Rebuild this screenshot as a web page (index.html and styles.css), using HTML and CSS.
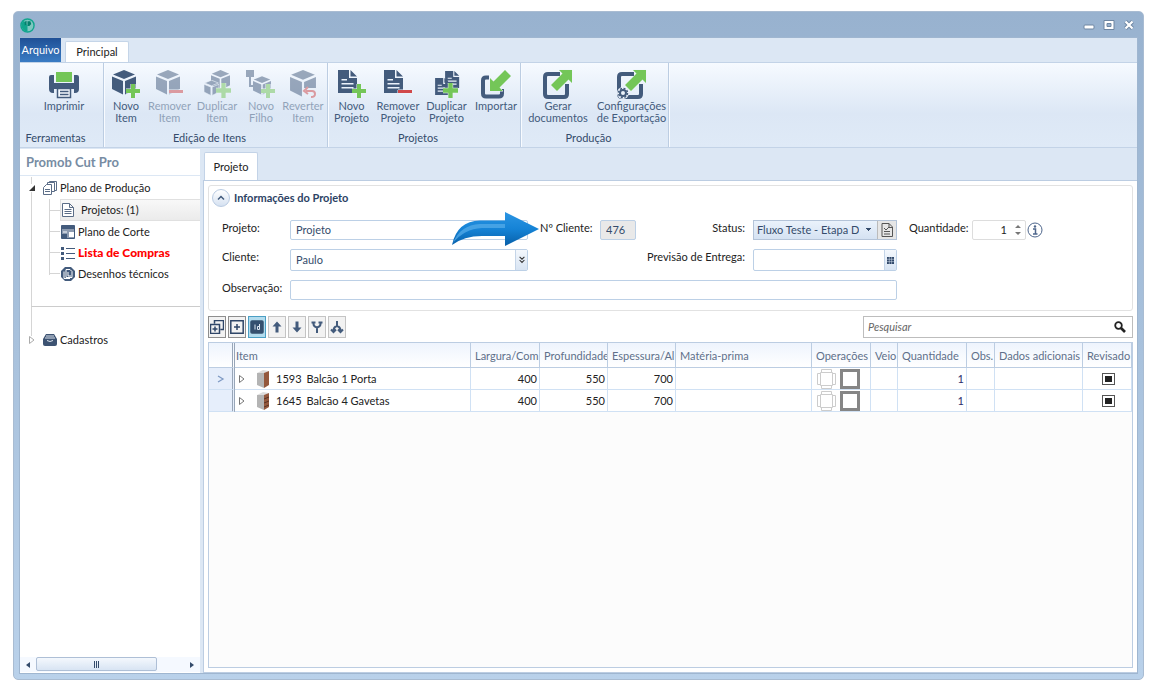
FILE: index.html
```html
<!DOCTYPE html>
<html lang="pt-BR">
<head>
<meta charset="utf-8">
<title>Promob Cut Pro</title>
<link rel="stylesheet" href="styles.css">
</head>
<body>
<svg class="defs" aria-hidden="true">
  <defs>
    <symbol id="cube" viewBox="0 0 24 25"><path d="M12 0 23 4.500 12 9 1 4.500ZM0 6.500 11 11V24.500L0 19ZM24 6.500 13 11V24.500L24 19Z"/></symbol>
    <symbol id="doc" viewBox="0 0 20 23"><path fill-rule="evenodd" d="M0 0H11V8H19V23H0ZM3.500 9H9V10.500H3.500ZM3.500 13H15.500V14.500H3.500ZM3.500 17H15.500V18.500H3.500ZM12.500 0 19 6.500H12.500Z"/></symbol>
    <symbol id="plus" viewBox="0 0 14 14"><path class="halo" d="M5 0h4v5H14v4H9V14h-4V9H0v-4h5z"/></symbol>
    <symbol id="box" viewBox="0 0 28 28"><path d="M17 2H5Q2 2 2 5V22Q2 25 5 25H21Q24 25 24 22V12"/></symbol>
  </defs>
</svg>

<div class="window">
  <header class="titlebar">
    <svg class="logo" viewBox="0 0 16 16"><circle cx="8" cy="8" r="7" fill="#7fc7c0" stroke="#12a58d" stroke-width="1.500"/><path d="M8 8v6.500a6.500 6.500 0 0 1-4-11.500Z" fill="#12a58d"/><path d="M5 4l2-1v4l-2 1ZM8 3.500l3 0 1 3-2 2-2 0Z" fill="#057f6c"/></svg>
    <div class="win-buttons">
      <button type="button" aria-label="Minimizar"><svg viewBox="0 0 12 10"><rect x="1" y="5" width="10" height="4" rx="1" fill="#fff" stroke="#6e86a2"/></svg></button>
      <button type="button" aria-label="Maximizar"><svg viewBox="0 0 12 10"><path d="M1 .5h10v9H1z" fill="#fff" stroke="#6e86a2"/><path d="M4 3.500h4v3H4z" fill="#9ab3d0" stroke="#6e86a2"/></svg></button>
      <button type="button" aria-label="Fechar"><svg viewBox="0 0 12 10"><path d="m2.500 1.500 7 7m0-7-7 7" stroke="#6e86a2" stroke-width="4"/><path d="m2.500 1.500 7 7m0-7-7 7" stroke="#fff" stroke-width="2.200"/></svg></button>
    </div>
  </header>

  <div class="client">
    <nav class="tabs">
      <button type="button" class="tab-file">Arquivo</button>
      <button type="button" class="tab-main">Principal</button>
    </nav>

    <section class="ribbon">
      <div class="group group-tools">
        <div class="tools">
          <button type="button" class="tool"><svg viewBox="0 0 30 30"><path d="M0 8Q0 6 2 6H5V15H25V6H28Q30 6 30 8V20Q30 24 26 24H25V17H5V24H4Q0 24 0 20Z" fill="#435b7c"/><path d="M2 14h26v6H2z" fill="#435b7c"/><path d="M7 3h16v10H7z" fill="#74c658"/><path d="M8.500 19.500h13v9h-13zM11 22.500h8.500M11 25.500h8.500" fill="#f5f9fe" stroke="#435b7c" stroke-width="1.500"/></svg>Imprimir</button>
        </div>
        <h2>Ferramentas</h2>
      </div>
      <div class="group group-items">
        <div class="tools">
          <button type="button" class="tool"><svg viewBox="0 0 30 30"><use href="#cube" x="1" y="1" width="24" height="25"/><use href="#plus" x="15" y="15" width="14" height="14"/></svg>Novo<br>Item</button>
          <button type="button" class="tool" disabled><svg viewBox="0 0 30 30"><use href="#cube" x="1" y="1" width="24" height="25"/><path class="halo red" d="M14 21h14v3H14z"/></svg>Remover<br>Item</button>
          <button type="button" class="tool" disabled><svg viewBox="0 0 30 30"><use href="#cube" x="9" y="1" width="19" height="20"/><use class="halo-dark" href="#cube" x="2" y="11" width="15" height="16"/><use href="#plus" x="14" y="14" width="15" height="15"/></svg>Duplicar<br>Item</button>
          <button type="button" class="tool" disabled><svg viewBox="0 0 30 30"><path d="M0 1h8v7H5v8h3v2H3V8H0z"/><use href="#cube" x="7" y="7" width="18" height="19"/><use href="#plus" x="15" y="15" width="14" height="14"/></svg>Novo<br>Filho</button>
          <button type="button" class="tool" disabled><svg viewBox="0 0 30 30"><use href="#cube" x="2" y="1" width="26" height="27"/><path d="M15 19h14v10H15z" fill="#e9f0f9"/><path d="M18 22h6q3 0 3 3t-4 3M20 18l-4 4 4 3" fill="none" stroke="#d0484a" stroke-width="2"/></svg>Reverter<br>Item</button>
        </div>
        <h2>Edição de Itens</h2>
      </div>
      <div class="group group-projects">
        <div class="tools">
          <button type="button" class="tool"><svg viewBox="0 0 30 30"><use href="#doc" x="1" y="1" width="20" height="23"/><use href="#plus" x="15" y="15" width="14" height="14"/></svg>Novo<br>Projeto</button>
          <button type="button" class="tool"><svg viewBox="0 0 30 30"><use href="#doc" x="1" y="1" width="20" height="23"/><path class="halo red" d="M15 21h14v3H15z"/></svg>Remover<br>Projeto</button>
          <button type="button" class="tool"><svg viewBox="0 0 30 30"><use href="#doc" x="3" y="9" width="15" height="17"/><use href="#doc" x="13" y="2" width="15" height="17"/><use href="#plus" x="11" y="14" width="15" height="15"/></svg>Duplicar<br>Projeto</button>
          <button type="button" class="tool"><svg viewBox="0 0 30 30"><path class="line" d="M8 8.500H5Q2 8.500 2 11.500V24.500Q2 27.500 5 27.500H18Q21 27.500 21 24.500V20"/><path class="halo" d="M9 9v13h13l-3.500-3.500L30 7l-6-6L12.500 12.500z"/></svg>Importar</button>
        </div>
        <h2>Projetos</h2>
      </div>
      <div class="group group-output">
        <div class="tools">
          <button type="button" class="tool"><svg viewBox="0 0 30 30"><use class="line" href="#box" x="0" y="3" width="28" height="28"/><path class="halo" d="M16 1h13v13l-3.500-3.500L14 22l-6-6L19.500 4.500z"/></svg>Gerar<br>documentos</button>
          <button type="button" class="tool"><svg viewBox="0 0 30 30"><use class="line" href="#box" x="0" y="3" width="28" height="28"/><path class="halo" d="M16 1h13v13l-3.500-3.500L14 22l-6-6L19.500 4.500z"/><circle cx="6" cy="24" r="6" fill="#eaf1fa"/><circle cx="6" cy="24" r="4.500" fill="none" stroke="#435b7c" stroke-width="1.500" stroke-dasharray="2 1.530"/><circle cx="6" cy="24" r="3" fill="none" stroke="#435b7c" stroke-width="2"/></svg>Configurações<br>de Exportação</button>
        </div>
        <h2>Produção</h2>
      </div>
    </section>

    <div class="work">
      <aside class="side">
        <h1>Promob Cut Pro</h1>
        <div class="tree">
          <div class="branch">
            <div class="node root"><svg class="twist" viewBox="0 0 8 8"><path d="M7 1v6H1z" fill="#333"/></svg><svg class="ico" viewBox="0 0 14 14"><g fill="#fff" stroke="#5b6d87"><path d="M6.500 .5h7v9h-7z"/><path d="M4.500 1.500h7v9h-7z"/><path d="m.5 6.500 3-3h5v10h-8z"/><path d="M2 8.500h5M2 10.500h5"/></g></svg>Plano de Produção</div>
            <ul>
              <li><a class="node active" href="#projetos"><svg class="ico" viewBox="0 0 14 14"><path d="M1.500 .5h7l4 4v9h-11zM8.500 .5v4h4M3.500 6.500h7M3.500 8.500h7M3.500 10.500h7" fill="#fff" stroke="#5b6d87"/></svg>Projetos: (1)</a></li>
              <li><a class="node" href="#corte"><svg class="ico" viewBox="0 0 14 14"><path d="M.5 .5h13v13H.5z" fill="#8d9bb0" stroke="#435b7c"/><path d="M1 1h12v3H1zM1 9h5v4H1z" fill="#435b7c"/><path d="M8 7h5v5H8z" fill="#fff"/><path d="M2 6h4v2H2z" fill="#c4ccd8"/></svg>Plano de Corte</a></li>
              <li><a class="node alert" href="#compras"><svg class="ico" viewBox="0 0 14 14"><path d="M0 1h3v3H0zM0 6h3v3H0zM0 11h3v3H0zM5 2h9v1H5zM5 7h9v1H5zM5 12h9v1H5z" fill="#435b7c"/></svg>Lista de Compras</a></li>
              <li><a class="node" href="#desenhos"><svg class="ico" viewBox="0 0 14 14"><path d="M4 0h6l4 4v6l-4 4H4L0 10V4z" fill="#435b7c"/><path d="M5 2.500h4l2 2v6H5zM3 4.500v7h6M7 5v4h3" fill="none" stroke="#fff"/></svg>Desenhos técnicos</a></li>
            </ul>
          </div>
          <div class="branch last">
            <div class="node root"><svg class="twist" viewBox="0 0 8 8"><path d="M1.500 .5 6 4 1.500 7.500z" fill="#fff" stroke="#aaa"/></svg><svg class="ico" viewBox="0 0 14 14"><path d="M3 1h8l3 5v5q0 2-2 2H2q-2 0-2-2V6z" fill="#3d5372"/><path d="M3 3h8M2 5h10" stroke="#dfe6ef" fill="none"/><path d="M4 7.500q3 2 6 0" stroke="#dfe6ef" fill="none"/></svg>Cadastros</div>
          </div>
        </div>
        <div class="scroll">
          <button type="button" aria-label="Rolar para a esquerda"><svg viewBox="0 0 6 8"><path d="M5 1v6L1 4z"/></svg></button>
          <div class="track"><div class="thumb"><i></i><i></i><i></i></div></div>
          <button type="button" aria-label="Rolar para a direita"><svg viewBox="0 0 6 8"><path d="M1 1v6l4-3z"/></svg></button>
        </div>
      </aside>

      <main class="main">
        <div class="doc-tabs"><button type="button">Projeto</button></div>
        <div class="page">
          <section class="info">
            <div class="info-head">
              <button type="button" aria-label="Recolher"><svg viewBox="0 0 8 6"><path d="m1 4.500 3-3 3 3" fill="none" stroke="#435b7c" stroke-width="1.500"/></svg></button>
              <h2>Informações do Projeto</h2>
            </div>
            <form class="fields">
              <label for="projeto">Projeto:</label>
              <input id="projeto" type="text" value="Projeto">
              <label class="c-ncli" for="ncli">Nº Cliente:</label>
              <input id="ncli" class="c-ncliv" type="text" value="476" readonly>
              <label class="c-status right" for="status">Status:</label>
              <div class="c-val status">
                <select id="status"><option>Fluxo Teste - Etapa Desenho</option></select>
                <button type="button" aria-label="Detalhes"><svg viewBox="0 0 12 14"><path d="M1 .5h7l3.500 3.500v9.500H1zM8 .5v4h3.500M3 5l2 2 3-3M3 8.500h6M3 11h6" fill="none" stroke="#555"/></svg></button>
              </div>
              <label class="c-qty" for="qtd">Quantidade:</label>
              <div class="c-qtyv spin"><input id="qtd" type="text" value="1"><svg viewBox="0 0 6 12"><path d="M3 1 6 4H0zM0 8h6L3 11z" fill="#777"/></svg></div>
              <svg class="c-info" viewBox="0 0 16 16"><circle cx="8" cy="8" r="7" fill="#fff" stroke="#4e668c"/><circle cx="8" cy="4.500" r="1.200" fill="#4e668c"/><path d="M6 7h2.500v5M6 12h4.500" fill="none" stroke="#4e668c" stroke-width="1.500"/></svg>

              <label for="cliente">Cliente:</label>
              <div class="combo"><input id="cliente" type="text" value="Paulo"><button type="button" aria-label="Abrir"><svg viewBox="0 0 8 10"><path d="m1 1 3 3 3-3M1 5l3 3 3-3" fill="none" stroke="#333" stroke-width="1.300"/></svg></button></div>
              <label class="c-date right" for="entrega">Previsão de Entrega:</label>
              <div class="combo c-val"><input id="entrega" type="text"><button type="button" aria-label="Calendário"><svg class="cal" viewBox="0 0 7 7"><path d="M0 0h7v7H0z" fill="#2f4668"/><path d="M0 2.300h7M0 4.600h7M2.300 0v7M4.600 0v7" stroke="#dce7f5" stroke-width=".5"/></svg></button></div>

              <label for="obs">Observação:</label>
              <input id="obs" class="c-wide" type="text">
              <svg class="pointer" viewBox="0 0 88 36"><defs><linearGradient id="blue" x1="0" y1="0" x2="0" y2="1"><stop offset="0" stop-color="#2b95e3"/><stop offset=".5" stop-color="#1583d6"/><stop offset="1" stop-color="#075fa8"/></linearGradient></defs><path d="M0 34Q5 10 28 9.500H53V1L87 18 53 35V25H30Q12 25 0 34Z" fill="url(#blue)"/><path d="M1 32Q8 14 28 13H53V17H30Q12 18 1 32Z" fill="#58aeea" opacity=".7"/></svg>
            </form>
          </section>

          <div class="bar">
            <div class="bar-buttons">
              <button type="button" aria-label="Expandir tudo"><svg viewBox="0 0 14 14"><path d="M4.500 3.500v-3h9v9h-3M.5 4.500h9v9h-9zM5 6.500v5M2.500 9h5"/></svg></button>
              <button type="button" aria-label="Expandir"><svg viewBox="0 0 14 14"><path d="M.8 .8h12.400v12.400H.8zM7 4v6M4 7h6"/></svg></button>
              <button type="button" class="on" aria-label="Mostrar Id"><svg viewBox="0 0 14 14"><rect x="1" y="1" width="12" height="12" rx="1" fill="#35506f" stroke="#35506f"/><path d="M5 4.500v5M9.500 4v5.500H7.500V6.500h2" stroke="#dfe8f2" stroke-width="1"/></svg></button>
              <button type="button" class="soft" aria-label="Subir"><svg viewBox="0 0 14 14"><path d="M7 1.500 11.500 6.500H8.500V12.500H5.500V6.500H2.500z" class="solid"/></svg></button>
              <button type="button" class="soft" aria-label="Descer"><svg viewBox="0 0 14 14"><path d="M7 12.500 11.500 7.500H8.500V1.500H5.500v6H2.500z" class="solid"/></svg></button>
              <button type="button" class="soft" aria-label="Unir"><svg viewBox="0 0 14 14"><path d="M3.500 2v2q0 2.500 3.500 3.500 3.500-1 3.500-3.500V2M7 7v6M1.500 2.500h4M8.500 2.500h4"/></svg></button>
              <button type="button" class="soft" aria-label="Separar"><svg viewBox="0 0 14 14"><path d="M7 1v5q-3.500 1-3.500 5M7 6q3.500 1 3.500 5M1 9.500l2.500 2.500L6 9.500M8 9.500l2.500 2.500L13 9.500"/></svg></button>
            </div>
            <div class="search"><input type="search" placeholder="Pesquisar" aria-label="Pesquisar"><svg viewBox="0 0 12 12"><circle cx="4.500" cy="4.500" r="3.300" fill="none" stroke="#222" stroke-width="1.800"/><path d="m7 7 4 4" stroke="#222" stroke-width="2.600"/></svg></div>
          </div>

          <div class="grid">
            <table>
              <colgroup><col class="w-mark"><col class="w-item"><col class="w-len"><col class="w-num"><col class="w-num"><col><col class="w-op"><col class="w-veio"><col class="w-qty"><col class="w-obs"><col class="w-extra"><col class="w-rev"></colgroup>
              <thead><tr><th></th><th>Item</th><th>Largura/Com</th><th>Profundidade</th><th>Espessura/Al</th><th>Matéria-prima</th><th>Operações</th><th>Veio</th><th>Quantidade</th><th>Obs.</th><th>Dados adicionais</th><th>Revisado</th></tr></thead>
              <tbody>
                <tr><td><svg class="cur" viewBox="0 0 8 8"><path d="m1 1 5 3-5 3" fill="none" stroke="#7f9ac4" stroke-width="1.300"/></svg></td>
                  <td><div class="item"><svg class="exp" viewBox="0 0 8 8"><path d="M1.500 .5 6 4 1.500 7.500z" fill="#fff" stroke="#777"/></svg><svg class="cab" viewBox="0 0 14 18"><path d="M1 3 7 0l6 1-4 2z" fill="#ddd"/><path d="M1 3l7 0v15l-7-3z" fill="#b4b4b4"/><path d="M8 3l5-2v14l-5 3z" fill="#94583d"/></svg><span>1593</span><span>Balcão 1 Porta</span></div></td>
                  <td class="n">400</td><td class="n">550</td><td class="n">700</td><td></td>
                  <td><svg class="ops" viewBox="0 0 44 20"><path d="M4.500 3.500h12v13h-12zM5.500 .5h10v3h-10zM5.500 16.500h10v3h-10zM1.500 4.500h3v11h-3zM16.500 4.500h3v11h-3z" fill="#fff" stroke="#ccc"/><path d="M25.500 1.500h17v17h-17z" fill="#fff" stroke="#868686" stroke-width="3"/></svg></td>
                  <td></td><td class="n q">1</td><td></td><td></td><td class="chk"><input type="checkbox" aria-label="Revisado 1593"></td></tr>
                <tr><td></td>
                  <td><div class="item"><svg class="exp" viewBox="0 0 8 8"><path d="M1.500 .5 6 4 1.500 7.500z" fill="#fff" stroke="#777"/></svg><svg class="cab" viewBox="0 0 14 18"><path d="M1 3 7 0l6 1-4 2z" fill="#ddd"/><path d="M1 3l7 0v15l-7-3z" fill="#b4b4b4"/><path d="M8 3l5-2v14l-5 3z" fill="#94583d"/><path d="m8 7 5-2M8 11l5-2M8 15l5-2" stroke="#5b3222"/></svg><span>1645</span><span>Balcão 4 Gavetas</span></div></td>
                  <td class="n">400</td><td class="n">550</td><td class="n">700</td><td></td>
                  <td><svg class="ops" viewBox="0 0 44 20"><path d="M4.500 3.500h12v13h-12zM5.500 .5h10v3h-10zM5.500 16.500h10v3h-10zM1.500 4.500h3v11h-3zM16.500 4.500h3v11h-3z" fill="#fff" stroke="#ccc"/><path d="M25.500 1.500h17v17h-17z" fill="#fff" stroke="#868686" stroke-width="3"/></svg></td>
                  <td></td><td class="n q">1</td><td></td><td></td><td class="chk"><input type="checkbox" aria-label="Revisado 1645"></td></tr>
              </tbody>
            </table>
          </div>
        </div>
      </main>
    </div>
  </div>
</div>
</body>
</html>
```
FILE: styles.css
```css
* { box-sizing: border-box; }
body {
  margin: 0;
  padding: 11px 17px 7px 13px;
  height: 100vh;
  background: #fff;
  color: #222;
  font: 11px/14px Lato, "Open Sans", sans-serif;
}
button, input, select { font: inherit; color: inherit; margin: 0; padding: 0; border: 0; background: none; border-radius: 0; min-width: 0; }
input:focus { outline: none; }
h1, h2, ul { margin: 0; padding: 0; font-size: inherit; list-style: none; }
a { color: inherit; text-decoration: none; }
svg { display: block; flex: none; }
.defs { position: absolute; width: 0; height: 0; }

.window {
  height: 100%;
  display: flex;
  flex-direction: column;
  padding: 0 6px 6px;
  border: 1px solid #a9bcd2;
  border-radius: 5px;
  background: linear-gradient(#98b2cf, #b9d1ea);
}
.titlebar { height: 26px; flex: none; display: flex; justify-content: space-between; align-items: center; }
.logo { width: 15px; height: 15px; }
.win-buttons { display: flex; gap: 8px; padding-right: 2px; }
.win-buttons svg { width: 12px; height: 10px; fill: none; }
.client { flex: 1; min-height: 0; display: flex; flex-direction: column; background: #dce7f4; box-shadow: 0 0 0 1px #9fb6d0; }

.tabs { display: flex; flex: none; gap: 4px; height: 24px; }
.tab-file { width: 41px; color: #fff; background: linear-gradient(#1f5096, #3a7cc4); }
.tab-main { width: 64px; margin-top: 3px; background: #fff; border: 1px solid #c5d5e8; border-bottom: 0; border-radius: 2px 2px 0 0; }

.ribbon { display: flex; flex: none; height: 86px; border: solid #c3d3e7; border-width: 1px 0; background: linear-gradient(#f6faff, #dce7f5 60%, #dfeaf7); }
.group { display: flex; flex-direction: column; justify-content: space-between; border-right: 1px solid #bccde2; box-shadow: 1px 0 #f8fbff; }
.tools { display: grid; padding-top: 6px; }
.group-tools { width: 84px; }
.group-tools .tools { padding-left: 5px; }
.group-items .tools { grid-template-columns: 44px 43px 52px 36px 48px; }
.group-projects .tools { grid-template-columns: 47px 46px 51px 48px; }
.group-output .tools { grid-template-columns: 74px 73px; }
.tool { display: flex; flex-direction: column; align-items: center; justify-content: flex-start; line-height: 12px; color: #435b7c; white-space: nowrap; }
.tool svg { width: 30px; height: 30px; margin-bottom: 1px; fill: #435b7c; }
.tool:disabled { opacity: .5; }
.halo { fill: #74c658; stroke: #eef4fc; stroke-width: 1; paint-order: stroke; }
.halo.red { fill: #d0484a; }
.halo-dark { stroke: #eef4fc; }
.line { fill: none; stroke: #435b7c; stroke-width: 4; }
.group h2 { font-weight: 400; text-align: center; padding: 0 12px 2px 0; color: #344b6b; }

.work { flex: 1; min-height: 0; display: flex; gap: 3px; padding-top: 1px; }
.side { width: 180px; flex: none; display: flex; flex-direction: column; background: #fff; }
.side h1 { height: 27px; padding: 6px; font-size: 13px; color: #778ca3; border-bottom: 1px solid #dce7f4; }
.tree { flex: 1; padding: 1px 0 0 11px; }
.branch { border-left: 1px solid #d5d5d5; border-bottom: 1px solid #ccc; height: 130px; }
.branch.last { border-bottom: 0; height: 34px; padding-top: 22px; }
.node { display: flex; align-items: center; height: 22px; gap: 3px; white-space: nowrap; }
.node.root { margin-left: -4px; gap: 3px; }
.twist { width: 8px; height: 8px; margin-right: 4px; background: #fff; }
.ico { width: 14px; height: 14px; }
.tree ul { margin-left: 17px; border-left: 1px solid #d5d5d5; height: 76px; }
.tree li { display: flex; align-items: center; }
.tree li::before { content: ""; width: 10px; border-top: 1px solid #d5d5d5; }
.tree li .node { flex: 1; height: 21px; padding-left: 1px; }
.tree li .active { height: 22px; background: linear-gradient(#f8f8f8, #ebebeb); border: 1px solid #e0e0e0; border-right: 0; gap: 6px; padding-left: 0; }
.tree li .alert { color: #f00; font-weight: 900; font-size: 12px; }
.scroll { display: flex; height: 15px; margin-bottom: 1px; background: #f5f9ff; }
.scroll button { width: 16px; display: grid; place-items: center; }
.scroll button svg { width: 6px; height: 8px; fill: #344b6b; }
.track { flex: 1; }
.thumb { width: 82%; height: 14px; display: flex; gap: 1px; justify-content: center; align-items: center; border: 1px solid #aebfd6; border-radius: 2px; background: linear-gradient(#f4f8fd, #d8e4f3); }
.thumb i { width: 1px; height: 7px; background: #344b6b; }

.main { flex: 1; min-width: 0; display: flex; flex-direction: column; }
.doc-tabs { height: 31px; flex: none; padding: 3px 0 0 1px; }
.doc-tabs button { width: 54px; height: 29px; background: #fff; border: 1px solid #c3d3e7; border-bottom: 0; border-radius: 2px 2px 0 0; }
.page { flex: 1; min-height: 0; display: flex; flex-direction: column; padding: 4px; background: #fff; border: 1px solid #bccde2; border-right: 0; }

.info { flex: none; border: 1px solid #e2e2e2; border-radius: 3px; height: 126px; }
.info-head { display: flex; align-items: center; gap: 4px; height: 24px; padding-left: 3px; color: #2c4264; }
.info-head button { width: 18px; height: 18px; display: grid; place-items: center; border: 1px solid #b9cbe2; border-radius: 50%; background: linear-gradient(#fff, #d5e1f1); }
.info-head button svg { width: 8px; height: 6px; }
.fields {
  position: relative;
  display: grid;
  grid-template-columns: 68px 238px 12px 60px 36px 117px 144px 12px 63px 54px 17px;
  grid-template-rows: 20px 22px 20px;
  row-gap: 9px;
  padding: 10px 0 0 13px;
}
.fields label { grid-column: 1; padding-top: 1px; white-space: nowrap; }
.fields .right { text-align: right; padding-right: 8px; }
.fields > input, .combo { grid-column: 2; }
.fields > input, .combo, .spin { border: 1px solid #bcd0e6; border-radius: 2px; background: #fff; color: #344b6b; }
.fields input { padding-left: 5px; }
.fields .c-ncli { grid-column: 4; }
.fields .c-ncliv { grid-column: 5; background: #e9e9e9; }
.fields .c-status { grid-column: 6; }
.fields .c-val { grid-column: 7; }
.fields .c-qty { grid-column: 9; }
.fields .c-qtyv { grid-column: 10; }
.fields .c-info { grid-column: 11; width: 16px; height: 16px; align-self: center; justify-self: end; }
.fields .c-date { grid-column: 3 / 7; }
.fields .c-wide { grid-column: 2 / 8; }
.combo { display: flex; }
.combo input { flex: 1; }
.combo button { width: 12px; display: grid; place-items: center; border-left: 1px solid #c5d5e8; background: linear-gradient(#f4f8fd, #d8e4f3); }
.combo button svg { width: 8px; height: 8px; }
.combo button .cal { width: 7px; height: 7px; }
.status { display: flex; border: 1px solid #b3c3d8; }
.status select { flex: 1; appearance: none; padding: 0 18px 0 3px; color: #344b6b; background: linear-gradient(#344b6b, #344b6b) no-repeat right 7px top 8px / 3px 1px, linear-gradient(#344b6b, #344b6b) no-repeat right 6px top 7px / 5px 1px, linear-gradient(#344b6b, #344b6b) no-repeat right 8px top 9px / 1px 1px, linear-gradient(#eaf2fb, #d5e2f2); text-overflow: clip; }
.status button { width: 19px; display: grid; place-items: center; background: #e6e6e6; border-left: 1px solid #bbb; }
.status button svg { width: 12px; height: 14px; }
.spin { display: flex; align-items: center; border-color: #ddd; }
.spin input { flex: 1; text-align: right; padding-right: 8px; color: #222; }
.spin svg { width: 6px; height: 12px; margin-right: 4px; }
.pointer { position: absolute; left: 243px; top: 1px; width: 88px; height: 36px; }

.bar { flex: none; display: flex; justify-content: space-between; height: 22px; margin: 5px 0 4px; }
.bar-buttons { display: flex; gap: 2px; }
.bar-buttons button { width: 18px; height: 22px; display: grid; place-items: center; border: 1px solid #8e8e8e; background: #f2f2f2; }
.bar-buttons .soft { border-color: #c4c4c4; }
.bar-buttons .on { border-color: #4b9fc4; background: #b3dcee; }
.bar-buttons svg { width: 14px; height: 14px; fill: none; stroke: #2f4668; stroke-width: 1.5; }
.bar-buttons .soft svg { stroke: #435b7c; stroke-width: 2; }
.bar-buttons .solid { fill: #435b7c; stroke: none; }
.search { width: 270px; height: 22px; display: flex; align-items: center; border: 1px solid #bdbdbd; }
.search input { flex: 1; padding-left: 4px; font-style: italic; appearance: none; }
.search input::placeholder { color: #666; opacity: 1; }
.search svg { width: 12px; height: 12px; margin-right: 6px; }

.grid { flex: 1; min-height: 0; background: #fcfcfc; border: 1px solid #bccde2; }
table { width: 100%; table-layout: fixed; border-collapse: separate; border-spacing: 0; background: #fff; }
.w-mark { width: 26px; }
.w-item { width: 236px; }
.w-len { width: 69px; }
.w-num { width: 68px; }
.w-op { width: 59px; }
.w-veio { width: 27px; }
.w-qty { width: 69px; }
.w-obs { width: 28px; }
.w-extra { width: 88px; }
.w-rev { width: 49px; }
th, td { padding: 0 3px 0 5px; border-right: 1px solid #d0e1f4; border-bottom: 1px solid #d0e1f4; text-align: left; font-weight: 400; white-space: nowrap; overflow: hidden; }
th { height: 25px; padding: 2px 0 0 4px; color: #60708a; background: linear-gradient(#eef4fd, #fff); border-color: #bccde2; }
th:first-child, td:first-child { border-right: 3px double #98a6b8; }
th:nth-child(2) { padding-left: 1px; }
td { height: 22px; }
td:nth-child(2) { padding-left: 3px; }
td:first-child { background: #e6eefb; }
.cur { width: 8px; height: 8px; margin-left: 3px; }
.item { display: flex; align-items: center; }
.item span + span { margin-left: 5px; }
.exp { width: 8px; height: 8px; margin-right: 10px; }
.cab { width: 14px; height: 18px; margin-right: 6px; }
.n { text-align: right; padding-right: 2px; }
.q { color: #2b2b6b; }
td:has(.ops) { padding: 0 0 0 4px; }
.ops { width: 44px; height: 20px; }
.chk input { appearance: none; display: block; width: 13px; height: 12px; margin: 0 auto; border: 1px solid #555; padding: 2px; background: #222 content-box; }
```
